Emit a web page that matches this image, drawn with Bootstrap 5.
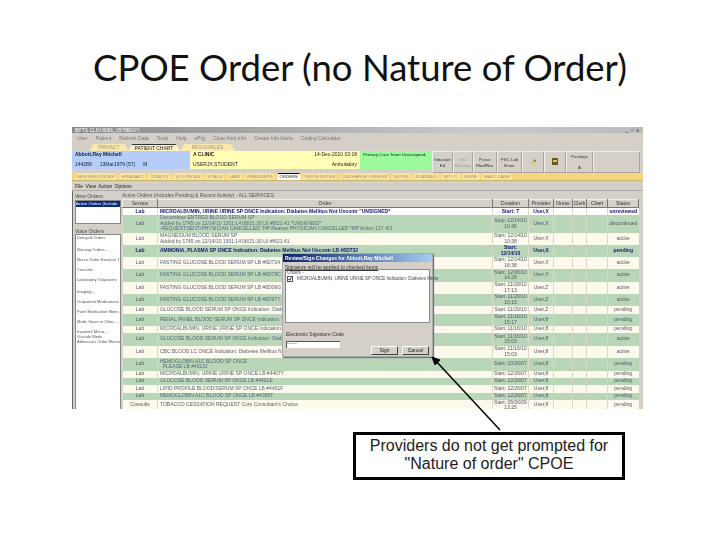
<!DOCTYPE html>
<html lang="en"><head><meta charset="utf-8"><title>CPOE Order</title>
<link href="https://cdn.jsdelivr.net/npm/bootstrap@5.3.0/dist/css/bootstrap.min.css" rel="stylesheet">
<style>
html,body{margin:0;background:#fff;width:720px;height:540px;overflow:hidden}
.slide{position:relative;width:720px;height:540px}
.slide-title{font:36.5px/1 Lato,sans-serif;color:#111;height:127px;padding-top:49px;margin:0;white-space:nowrap}
.win,.dlg{font:5px/5.5px "Liberation Sans",sans-serif;color:#333;filter:blur(.3px)}
.win{width:571px;height:282px;margin-left:72px;background:#d4d0c8;overflow:hidden}
.win-title{height:6px;background:linear-gradient(90deg,#8a8a8a,#c9c9c9 70%,#bbb);color:#fff;padding:0 3px;line-height:6px}
.win-ctl{color:#222;letter-spacing:1px}
.win-menu{height:11px;padding-left:5px;color:#777}
.top-tabs{height:7px;padding-left:18px}
.ttab{background:#fbe9ad;color:#998;text-align:center;clip-path:polygon(0 100%,8% 0,92% 0,100% 100%);line-height:7px}
.ttab-a{width:38px}.ttab-b{width:52px;background:#fff3c4;color:#222;border-top:1px solid #333;line-height:6px}.ttab-c{width:55px}
.hdr{height:22px}
.pnl{height:18px;padding:1px 3px;white-space:nowrap;overflow:hidden}
.pnl-blue{width:118px;background:#b5cdf8;color:#123}
.pnl-yellow{width:170px;background:#ffffb5;color:#222}
.pnl-green{width:72px;background:#99fb99;color:#222;font-size:4.4px}
.tbtn{height:22px;border:1px solid #a9a59c;border-top-color:#eee;border-left-color:#eee;text-align:center;color:#333;padding-top:5px;white-space:nowrap;overflow:hidden;font-size:4.4px}
.tb1{width:21px}.tb2{width:20px;color:#999;font-size:3.9px}.tb3{width:24px}.tb4{width:25px}.tb5,.tb6{width:22px}.tb7{width:27px;padding-top:2px}.tb8{width:47px}
.sub-tabs{height:8px;background:#f5d67c;gap:1px;padding-left:2px;border-bottom:1px solid #c9b36c;overflow:hidden}
.stab{background:#f9e3a0;color:#996;line-height:8px;padding:0 3px;white-space:nowrap;clip-path:polygon(0 100%,6% 0,94% 0,100% 100%);font-size:4.3px}
.stab-on{background:#fff;color:#222;border-top:1px solid #111;line-height:6px}
.file-menu{height:10px;padding:3px 3px 0;border-bottom:1px solid #aaa;word-spacing:1px;color:#222}
.side{width:50px;padding-left:2px;border-left:1px solid #666;flex:none}
.side-lbl{height:9px;padding-top:3px;color:#444}
.side-top{height:24px;background:#fff;border:1px solid #888;margin-right:1px;overflow:hidden}
.side-sel{background:#0a2a7a;color:#fff;white-space:nowrap;overflow:hidden;font-size:4.2px}
.side-lbl2{height:10px;padding-top:4.5px;color:#444}
.side-list{background:#fff;border:1px solid #888;margin-right:1px;height:178px;padding:0 1px;color:#555;white-space:nowrap;overflow:hidden;font-size:4.1px}
.s1{height:12px}.s2{height:10px}.s3{height:5px}
.tbl-cap{height:8px;padding-top:2px;white-space:nowrap;color:#555}
.ord{table-layout:fixed;width:516px;border-collapse:collapse;margin:0}
.ord th{background:#d4d0c8;font-weight:400;height:8px;padding:0;text-align:center;border:1px solid #777;border-top-color:#eee;border-left-color:#eee;color:#333}
.ord td{padding:0 .5px;text-align:center;border-left:1px solid #dcd8c8;vertical-align:middle;color:#556;background:transparent;white-space:nowrap;overflow:hidden}
.ord td.otx{text-align:left;padding-left:2px;color:#556677}
.r-c{background:#fdf9ec}.r-g{background:#b9d6b9}.r-w{background:#fff}
.r-b td,.ord .r-b td.otx{color:#14146e;font-weight:700}
.c1{width:35px}.c2{width:335px}.c3{width:36px}.c4{width:25px}.c5{width:19px}.c6{width:14px}.c7{width:21px}.c8{width:31px}
.h7{height:7px}.h8{height:8px}.h11{height:11px}.h12{height:12px}.h13{height:13px}.h18{height:18px}
.dlg{position:absolute;left:282px;top:253px;width:151px;height:104px;background:#d4d0c8;border:1px solid #aaa;box-shadow:1px 1px 1px #777}
.dlg-title{height:8px;background:linear-gradient(90deg,#0a246a,#a6caf0);color:#fff;font-weight:700;line-height:8px;padding-left:2px;white-space:nowrap;overflow:hidden}
.dlg-sign{padding:3px 2px 1px;height:7px;text-decoration:underline;white-space:nowrap}
.dlg-list{margin:0 2px;height:54px;background:#fff;border:1px solid #888;padding:0 1px;color:#445;font-size:4.5px}
.chk{width:6px;height:6px;border:1px solid #555;flex:none;display:flex}
.dlg-sig{padding:9px 3px 3px;height:18px;white-space:nowrap}
.dlg-row{padding:0 3px}
.dlg-inp{width:54px;height:7px;background:#fff;border-left:1px solid #555;border-top:1px solid #555;color:#555;line-height:3px;flex:none}
.dlg-btns{margin-top:5px}
.dlg-btn{width:27px;height:9px;background:#d4d0c8;border:1px solid #444;border-top-color:#fff;border-left-color:#fff;text-align:center;line-height:7px;color:#222}
.arrow{position:absolute;left:420px;top:345px;width:90px;height:95px}
.callout{position:absolute;left:353px;top:432px;width:272px;height:48px;border:3px solid #000;background:#fff;font:16px/18px "Liberation Sans",sans-serif;color:#222;text-align:center;padding-top:2px}
</style></head><body>
<div class="slide">
<h1 class="slide-title text-center fw-normal">CPOE Order (no Nature of Order)</h1>
<div class="win">
 <div class="win-title d-flex justify-content-between"><span>BPTS CLIN 8081_05^8BGYI</span><span class="win-ctl">_ ▫ x</span></div>
 <div class="win-menu d-flex align-items-center gap-2"><span>User</span><span>Patient</span><span>Refresh Data</span><span>Tools</span><span>Help</span><span>ePrg</span><span>Clear Alert Info</span><span>Create Info Alerts</span><span>Coding Calculator</span></div>
 <div class="top-tabs d-flex"><div class="ttab ttab-a">PRIVACY</div><div class="ttab ttab-b">PATIENT CHART</div><div class="ttab ttab-c">RESOURCES</div></div>
 <div class="hdr d-flex align-items-start">
  <div class="pnl pnl-blue"><div class="fw-bold">Abbott,Ray Mitchell</div><div class="d-flex gap-2 mt-1"><span>144288</span><span>13Mar1979 (57)</span><span>M</span></div></div>
  <div class="pnl pnl-yellow d-flex justify-content-between"><div><div class="fw-bold">A CLINIC</div><div class="mt-1">USERJX.STUDENT</div></div><div class="text-end"><div>14-Dec-2010 03:18</div><div class="mt-1">Ambulatory</div></div></div>
  <div class="pnl pnl-green">Primary Care Team Unassigned,</div>
  <div class="tbtn tb1">Inbasket<br>Ed</div><div class="tbtn tb2">Visit<br>Summary</div><div class="tbtn tb3">Purse<br>Med/Rec</div><div class="tbtn tb4">PSC Lab<br>Enter</div>
  <div class="tbtn tb5"><svg width="9" height="10" viewBox="0 0 9 10"><path d="M2 9V4h5v5z" fill="#d9d08a"/><path d="M4 5l2-3 1 2z" fill="#3a7a2a"/></svg></div>
  <div class="tbtn tb6"><svg width="8" height="9" viewBox="0 0 8 9"><rect x="1" y="1" width="6" height="7" fill="#6a5a1a"/><rect x="2" y="3" width="4" height="2" fill="#d8c860"/></svg></div>
  <div class="tbtn tb7">Postings<br><br>A</div><div class="tbtn tb8"></div>
 </div>
 <div class="sub-tabs d-flex"><span class="stab">NEW MED ORDER</span><span class="stab">HIS/ANALY</span><span class="stab">VITALITY</span><span class="stab">I/O / PROBS</span><span class="stab">VITALS</span><span class="stab">LABS</span><span class="stab">REMINDERS</span><span class="stab stab-on">ORDERS</span><span class="stab">WRITE NOTES</span><span class="stab">DISCHARGE ORDERS</span><span class="stab">NOTES</span><span class="stab">SCANNED</span><span class="stab">RPT IT</span><span class="stab">MORE</span><span class="stab">MAR / CARE</span></div>
 <div class="file-menu">File View Action Options</div>
 <div class="d-flex">
  <div class="side">
   <div class="side-lbl">View Orders:</div>
   <div class="side-top"><div class="side-sel">Active Orders (Include</div></div>
   <div class="side-lbl2">Voice Orders</div>
   <div class="side-list">
    <div class="s1">Delayed Orders</div><div class="s2">Nursing Orders...</div><div class="s2">Nurse Order Exercise 1</div><div class="s2">Consults</div><div class="s1">Laboratory Outpatient</div><div class="s2">Imaging...</div><div class="s2">Outpatient Medications</div><div class="s2">Point Medication Menu</div><div class="s2">Meds Given in Clinic...</div><div class="s3">Inpatient Menu...</div><div class="s3">Outside Meds</div><div class="s3">Admission Order Menus</div>
   </div>
  </div>
  <div class="flex-grow-1">
   <div class="tbl-cap">Active Orders (Includes Pending &amp; Recent Activity) - ALL SERVICES</div>
   <table class="ord">
    <thead><tr><th class="c1">Service</th><th class="c2">Order</th><th class="c3">Duration</th><th class="c4">Provider</th><th class="c5">Nurse</th><th class="c6">Clerk</th><th class="c7">Chart</th><th class="c8">Status</th></tr></thead>
    <tbody>
<tr class="r-w r-b h7"><td>Lab</td><td class="otx">MICROALBUMIN, URINE URINE SP ONCE Indication: Diabetes Mellitus Not Uncontr "UNSIGNED*</td><td>Start: T</td><td>User,X</td><td></td><td></td><td></td><td>unreviewed</td></tr>
<tr class="r-g h18"><td>Lab</td><td class="otx">Discontinue ENTRED BLOOD SERUM SP<br>Added by 1745 on 12/14/10 1301:14 08/21:30 LII #8/21:41 *UNSIGNED*<br>-REQUEST:SENT/PHYSICIAN CANCELLED "HP Reason PHYSICIAN CANCELLED *MP Action 12Y 4/1</td><td>Stop: 12/14/10<br>10:45</td><td>User,X</td><td></td><td></td><td></td><td>discontinued</td></tr>
<tr class="r-c h12"><td>Lab</td><td class="otx">MAGNESIUM BLOOD SERUM SP<br>Added by 1745 on 12/14/10 1301:14 08/21:30 LII #8/21:41</td><td>Start: 12/14/10<br>10:38</td><td>User,X</td><td></td><td></td><td></td><td>active</td></tr>
<tr class="r-g r-b h12"><td>Lab</td><td class="otx">AMMONIA, PLASMA SP ONCE Indication: Diabetes Mellitus Not Uncontr LB #8D732</td><td>Start:<br>12/14/10</td><td>User,X</td><td></td><td></td><td></td><td>pending</td></tr>
<tr class="r-c h12"><td>Lab</td><td class="otx">FASTING GLUCOSE BLOOD SERUM SP LB #6D724</td><td>Start: 12/14/10<br>16:38</td><td>User,X</td><td></td><td></td><td></td><td>active</td></tr>
<tr class="r-g h13"><td>Lab</td><td class="otx">FASTING GLUCOSE BLOOD SERUM SP LB #6D79C</td><td>Start: 12/06/10<br>14:28</td><td>User,X</td><td></td><td></td><td></td><td>active</td></tr>
<tr class="r-c h12"><td>Lab</td><td class="otx">FASTING GLUCOSE BLOOD SERUM SP LB #6D06G</td><td>Start: 11/29/10<br>17:13</td><td>User,Z</td><td></td><td></td><td></td><td>active</td></tr>
<tr class="r-g h12"><td>Lab</td><td class="otx">FASTING GLUCOSE BLOOD SERUM SP LB #6D97Y</td><td>Start: 11/29/10<br>10:15</td><td>User,Z</td><td></td><td></td><td></td><td>active</td></tr>
<tr class="r-c h8"><td>Lab</td><td class="otx">GLUCOSE BLOOD SERUM SP ONCE Indication: Diabetes Mellitus</td><td>Start: 11/29/10</td><td>User,Z</td><td></td><td></td><td></td><td>pending</td></tr>
<tr class="r-g h12"><td>Lab</td><td class="otx">RENAL PANEL BLOOD SERUM SP ONCE Indication: Diabetes Mellitus</td><td>Start: 11/16/10<br>15:17</td><td>User,8</td><td></td><td></td><td></td><td>pending</td></tr>
<tr class="r-c h7"><td>Lab</td><td class="otx">MICROALBUMIN, URINE URINE SP ONCE Indication: Diabetes</td><td>Start: 11/16/10</td><td>User,8</td><td></td><td></td><td></td><td>pending</td></tr>
<tr class="r-g h13"><td>Lab</td><td class="otx">GLUCOSE BLOOD SERUM SP ONCE Indication: Diabetes Mellitus</td><td>Start: 11/16/10<br>15:03</td><td>User,8</td><td></td><td></td><td></td><td>active</td></tr>
<tr class="r-c h12"><td>Lab</td><td class="otx">CBC BLOOD LC ONCE Indication: Diabetes Mellitus Not Uncontr</td><td>Start: 11/16/10<br>15:03</td><td>User,8</td><td></td><td></td><td></td><td>active</td></tr>
<tr class="r-g h13"><td>Lab</td><td class="otx">HEMOGLOBIN A1C BLOOD SP ONCE<br>&nbsp;&nbsp;PLEASE LB #4313J</td><td>Start: 10/26/07</td><td>User,8</td><td></td><td></td><td></td><td>pending</td></tr>
<tr class="r-c h7"><td>Lab</td><td class="otx">MICROALBUMIN, URINE URINE SP ONCE LB #4407Y</td><td>Start: 12/26/07</td><td>User,8</td><td></td><td></td><td></td><td>pending</td></tr>
<tr class="r-g h7"><td>Lab</td><td class="otx">GLUCOSE BLOOD SERUM SP ONCE LB #4401E</td><td>Start: 12/26/07</td><td>User,8</td><td></td><td></td><td></td><td>pending</td></tr>
<tr class="r-c h8"><td>Lab</td><td class="otx">LIPID PROFILE BLOOD/SERUM SP ONCE LB #4401F</td><td>Start: 12/26/07</td><td>User,8</td><td></td><td></td><td></td><td>pending</td></tr>
<tr class="r-g h7"><td>Lab</td><td class="otx">HEMOGLOBIN A1C BLOOD SP ONCE LB #4390T</td><td>Start: 12/26/07</td><td>User,8</td><td></td><td></td><td></td><td>pending</td></tr>
<tr class="r-c h11"><td>Consults</td><td class="otx">TOBACCO CESSATION REQUEST Core Consultant's Choice</td><td>Start: 05/06/09<br>13:25</td><td>User,8</td><td></td><td></td><td></td><td>pending</td></tr>
    </tbody>
   </table>
  </div>
 </div>
</div>
<div class="dlg">
 <div class="dlg-title">Review/Sign Changes for Abbott,Ray Mitchell</div>
 <div class="dlg-sign">Signature will be applied to checked items</div>
 <div class="dlg-list"><div>Orders -</div><div class="d-flex gap-1 align-items-center"><span class="chk"><svg width="4" height="4" viewBox="0 0 4 4"><path d="M.5 2l1 1.2L3.5.6" stroke="#003" fill="none"/></svg></span><span class="text-nowrap">MICROALBUMIN, URINE URINE SP ONCE Indication: Diabetes Mens</span></div></div>
 <div class="dlg-sig">Electronic Signature Code</div>
 <div class="dlg-row d-flex justify-content-between"><div class="dlg-inp">------</div><div class="d-flex gap-1 dlg-btns"><div class="dlg-btn">Sign</div><div class="dlg-btn">Cancel</div></div></div>
</div>
<svg class="arrow" viewBox="0 0 90 95"><path d="M80 85L15 15" stroke="#000" stroke-width="1.5" fill="none"/><path d="M12 12l8 3-5 5z" fill="#000" stroke="#000"/></svg>
<div class="callout">Providers do not get prompted for<br>"Nature of order" CPOE</div>
</div>
</body></html>
